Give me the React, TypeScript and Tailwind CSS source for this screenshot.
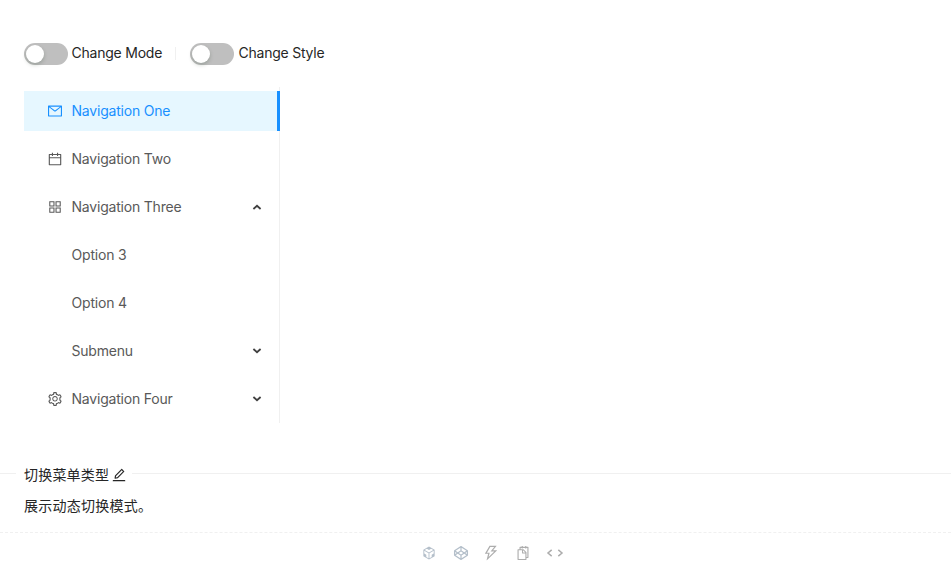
import React, { useState } from "react";
import {
  AiOutlineAppstore,
  AiOutlineCalendar,
  AiOutlineCodepen,
  AiOutlineCodeSandbox,
  AiOutlineEdit,
  AiOutlineMail,
  AiOutlineSetting,
  AiOutlineSnippets,
  AiOutlineThunderbolt,
} from "react-icons/ai";

function Switch({ label }: { label: string }) {
  const [on, setOn] = useState(false);
  return (
    <button
      type="button"
      role="switch"
      aria-checked={on}
      aria-label={label}
      onClick={() => setOn(!on)}
      className={`mt-0.5 flex h-[22px] w-11 items-center rounded-full px-0.5 ${on ? "justify-end bg-[#1890ff]" : "bg-[#bfbfbf]"}`}
    >
      <span className="size-[18px] rounded-full bg-white shadow-[0_2px_4px_rgba(0,35,11,0.2)]" />
    </button>
  );
}

function Arrow({ up = false }: { up?: boolean }) {
  return (
    <svg
      viewBox="0 0 10 6"
      className={`ml-auto h-1.5 w-2.5 ${up ? "rotate-180" : ""}`}
      fill="none"
      stroke="#404040"
      strokeWidth="1.8"
    >
      <path d="M1.4 1 5 4.2 8.6 1" />
    </svg>
  );
}

type ItemProps = {
  label: string;
  icon?: React.ReactNode;
  arrow?: "up" | "down";
  selected?: boolean;
};

function MenuItem({ label, icon, arrow, selected }: ItemProps) {
  return (
    <li
      className={`my-1 -mr-px flex h-10 items-center pl-[23px] ${
        selected ? "border-r-3 border-[#1890ff] bg-[#e6f7ff] text-[#1890ff]" : "pr-[18px] text-[#595959]"
      }`}
    >
      <span className="mr-2 w-4 text-base">{icon}</span>
      <span className="ml-[0.5px]">{label}</span>
      {arrow && <Arrow up={arrow === "up"} />}
    </li>
  );
}

function CodeIcon() {
  return (
    <svg viewBox="0 0 18 14" className="ml-px h-3.5 w-[18px]" fill="none" stroke="currentColor" strokeWidth="1.5">
      <path d="M5.7 3.9 2 7l3.7 3.1M12.3 3.9 16 7l-3.7 3.1" />
    </svg>
  );
}

export default function App() {
  return (
    <main className="h-[573px] overflow-hidden bg-white font-[Inter,'Noto_Sans_CJK_SC',sans-serif] text-sm leading-[22px] tracking-[-0.2px] text-[#262626]">
      <section className="h-[462px] px-6 pt-[42px]">
        <div className="flex h-[22px] items-center tracking-[-0.23px]">
          <Switch label="Change Mode" />
          <span className="ml-[3.5px] w-[89.5px] whitespace-nowrap">Change Mode</span>
          <span className="mr-3.5 ml-3.5 h-[13px] w-px bg-[#f0f0f0]" />
          <Switch label="Change Style" />
          <span className="ml-[4.5px] whitespace-nowrap">Change Style</span>
        </div>
        <ul className="mt-[23px] flex w-64 flex-col border-r border-[#f0f0f0]">
          <MenuItem label="Navigation One" icon={<AiOutlineMail />} selected />
          <MenuItem label="Navigation Two" icon={<AiOutlineCalendar />} />
          <MenuItem label="Navigation Three" icon={<AiOutlineAppstore />} arrow="up" />
          <MenuItem label="Option 3" />
          <MenuItem label="Option 4" />
          <MenuItem label="Submenu" arrow="down" />
          <MenuItem label="Navigation Four" icon={<AiOutlineSetting />} arrow="down" />
        </ul>
      </section>
      <section>
        <div className="flex h-6 items-start">
          <span className="mt-[11px] h-px w-4 bg-[#f0f0f0]" />
          <h2 className="mr-[5px] ml-2 flex h-6 items-center gap-0.5 tracking-[0.2px] whitespace-nowrap">
            <span className="pt-0.5">切换菜单类型</span>
            <AiOutlineEdit className="mt-0.5 size-4" />
          </h2>
          <span className="mt-[11px] h-px flex-1 bg-[#f0f0f0]" />
        </div>
        <p className="mt-[9px] h-[37px] px-6 tracking-[0.25px]">展示动态切换模式。</p>
        <footer className="flex h-[41px] items-center justify-center gap-3.5 border-t border-dashed border-[#f0f0f0] pl-[33px] text-lg text-[#adadad]">
          <AiOutlineCodeSandbox className="size-4 mx-px text-[#b4bfca]" />
          <AiOutlineCodepen className="size-[18px] text-[#b4bfca]" />
          <AiOutlineThunderbolt className="-ml-0.5" />
          <AiOutlineSnippets className="ml-px size-4" />
          <CodeIcon />
        </footer>
      </section>
    </main>
  );
}
